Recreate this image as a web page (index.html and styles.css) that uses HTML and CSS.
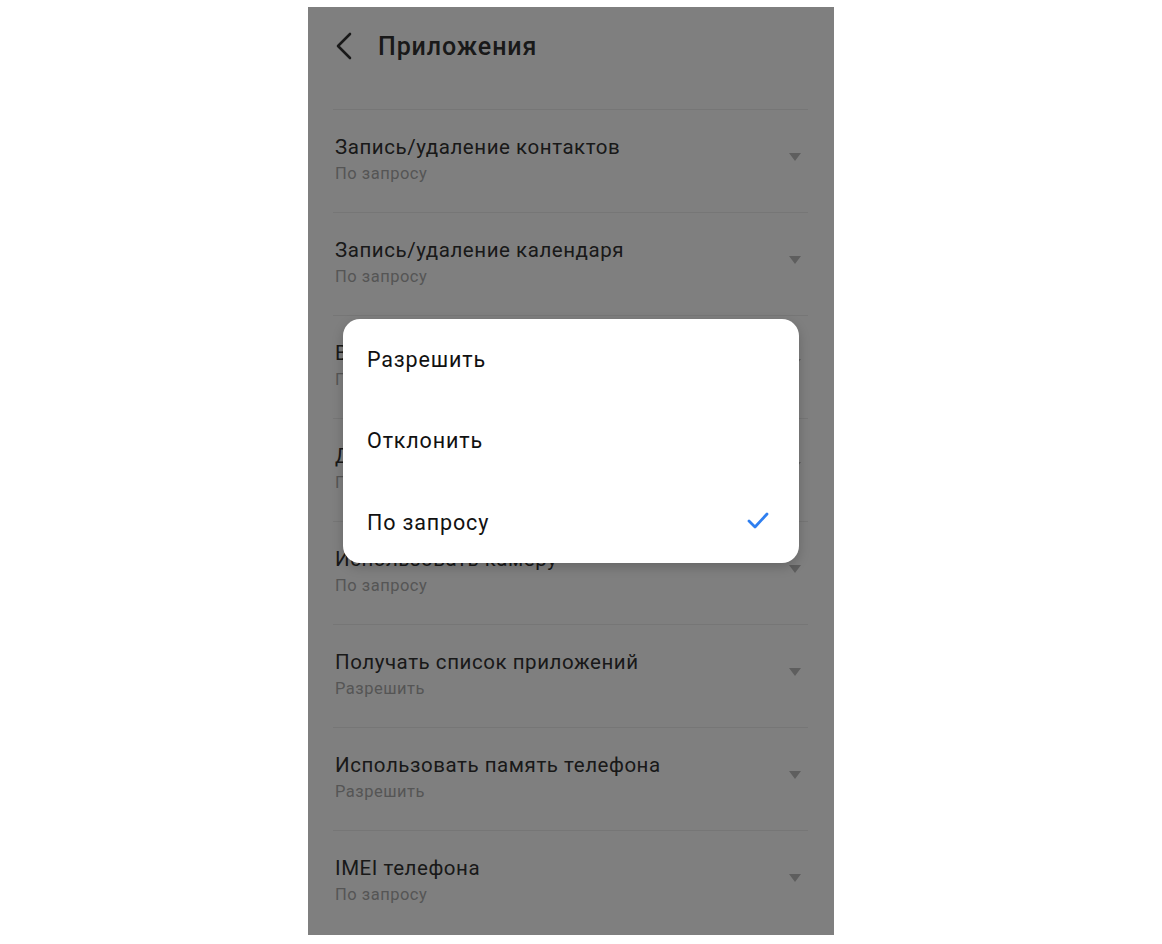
FILE: index.html
```html
<!DOCTYPE html>
<html lang="ru">
<head>
    <meta charset="UTF-8">
    <meta name="viewport" content="width=device-width, initial-scale=1.0">
    <title>Приложения</title>
    <link rel="stylesheet" href="styles.css">
</head>
<body>
    <div id="phone">
        <div id="header">
            <svg class="back" width="18" height="28" viewBox="0 0 18 28">
                <path d="M15 2 L3 14 L15 26" fill="none" stroke="#333" stroke-width="2.6" stroke-linecap="round" stroke-linejoin="round"/>
            </svg>
            <h1 id="page-title">Приложения</h1>
        </div>
        <ul id="perm-list">
            <li><div class="text"><div class="name">Запись/удаление контактов</div><div class="value">По запросу</div></div><span class="arrow"></span></li>
            <li><div class="text"><div class="name">Запись/удаление календаря</div><div class="value">По запросу</div></div><span class="arrow"></span></li>
            <li><div class="text"><div class="name">Выполнять вызовы</div><div class="value">По запросу</div></div><span class="arrow"></span></li>
            <li><div class="text"><div class="name">Доступ к местоположению</div><div class="value">По запросу</div></div><span class="arrow"></span></li>
            <li><div class="text"><div class="name">Использовать камеру</div><div class="value">По запросу</div></div><span class="arrow"></span></li>
            <li><div class="text"><div class="name">Получать список приложений</div><div class="value">Разрешить</div></div><span class="arrow"></span></li>
            <li><div class="text"><div class="name">Использовать память телефона</div><div class="value">Разрешить</div></div><span class="arrow"></span></li>
            <li><div class="text"><div class="name">IMEI телефона</div><div class="value">По запросу</div></div><span class="arrow"></span></li>
        </ul>
        <div id="dim"></div>
        <div id="dialog">
            <div class="option">Разрешить</div>
            <div class="option">Отклонить</div>
            <div class="option selected">По запросу
                <svg class="check" width="22" height="17" viewBox="0 0 22 17">
                    <path d="M2 9 L8 15 L20 2" fill="none" stroke="#2f7ff0" stroke-width="2.8" stroke-linecap="round" stroke-linejoin="round"/>
                </svg>
            </div>
        </div>
    </div>
</body>
</html>
```

FILE: styles.css
```css
body {
    margin: 0;
    padding: 7px 0 0 308px;
    background-color: #ffffff;
    font-family: Roboto, 'Noto Sans', sans-serif;
}
#phone {
    position: relative;
    width: 526px;
    height: 928px;
    background-color: #ffffff;
    overflow: hidden;
}
#header {
    display: flex;
    align-items: center;
    height: 78px;
    padding-left: 27px;
    margin-bottom: 24px;
}
#header .back {
    margin-right: 25px;
}
#page-title {
    margin: 0;
    font-size: 25px;
    font-weight: 500;
    letter-spacing: 0.9px;
    color: #333333;
}
#perm-list {
    list-style-type: none;
    margin: 0;
    padding: 0 26px 0 25px;
}
#perm-list li {
    display: flex;
    align-items: center;
    justify-content: space-between;
    border-top: 1px solid #ececec;
    padding: 24px 7px 27px 2px;
}
#perm-list .name {
    font-size: 20.5px;
    line-height: 26px;
    letter-spacing: 0.55px;
    color: #333333;
}
#perm-list .value {
    margin-top: 3px;
    font-size: 16.5px;
    line-height: 22px;
    letter-spacing: 0.5px;
    color: #ababab;
}
#perm-list .arrow {
    width: 0;
    height: 0;
    margin-top: -6px;
    border-left: 6.5px solid transparent;
    border-right: 6.5px solid transparent;
    border-top: 8px solid #bdbdbd;
}
#dim {
    position: absolute;
    inset: 0;
    background-color: rgba(0, 0, 0, 0.5);
}
#dialog {
    position: absolute;
    top: 312px;
    left: 35px;
    right: 35px;
    height: 244px;
    display: flex;
    flex-direction: column;
    background-color: #ffffff;
    border-radius: 17px;
    box-shadow: 0 4px 12px rgba(0, 0, 0, 0.2);
}
#dialog .option {
    flex: 1;
    display: flex;
    align-items: center;
    justify-content: space-between;
    padding: 0 30px 0 24px;
    font-size: 21.5px;
    letter-spacing: 0.85px;
    color: #111111;
}
#dialog .check {
    margin-top: -3px;
}
```
